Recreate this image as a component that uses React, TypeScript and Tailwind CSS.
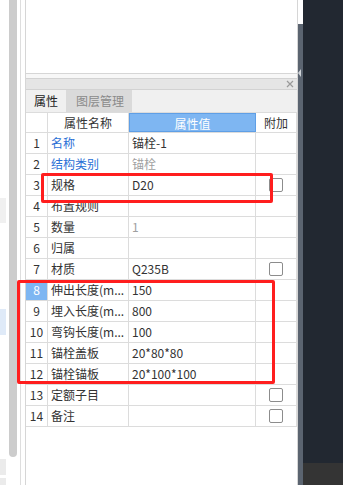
import React from "react"

type Row = {
  no: number
  name: string
  value?: string
  nameBlue?: boolean
  valueGrey?: boolean
  check?: boolean
  activeNo?: boolean
}

const ROWS: Row[] = [
  { no: 1, name: "名称", value: "锚栓-1", nameBlue: true },
  { no: 2, name: "结构类别", value: "锚栓", nameBlue: true, valueGrey: true },
  { no: 3, name: "规格", value: "D20", check: true },
  { no: 4, name: "布置规则" },
  { no: 5, name: "数量", value: "1", valueGrey: true },
  { no: 6, name: "归属" },
  { no: 7, name: "材质", value: "Q235B", check: true },
  { no: 8, name: "伸出长度(m...", value: "150", activeNo: true },
  { no: 9, name: "埋入长度(m...", value: "800" },
  { no: 10, name: "弯钩长度(m...", value: "100" },
  { no: 11, name: "锚栓盖板", value: "20*80*80" },
  { no: 12, name: "锚栓锚板", value: "20*100*100" },
  { no: 13, name: "定额子目", check: true },
  { no: 14, name: "备注", check: true },
]

function Checkbox() {
  return <div className="h-[14px] w-[14px] rounded-[2px] border border-[#8c8c8c] bg-white" />
}

function PropRow({ row }: { row: Row }) {
  return (
    <div className="flex h-[21px] border-b border-[#dcdcdc] text-[12px] leading-[20px]">
      <div
        className={
          row.activeNo
            ? "w-[22px] shrink-0 border-r border-[#dcdcdc] bg-[#7eb6f2] text-center text-white"
            : "w-[22px] shrink-0 border-r border-[#dcdcdc] text-center text-[#333]"
        }
      >
        {row.no}
      </div>
      <div
        className={
          row.nameBlue
            ? "w-[81px] shrink-0 overflow-hidden whitespace-nowrap border-r border-[#dcdcdc] pl-[3px] text-[#2a6fd6]"
            : "w-[81px] shrink-0 overflow-hidden whitespace-nowrap border-r border-[#dcdcdc] pl-[3px] text-[#333]"
        }
      >
        {row.name}
      </div>
      <div
        className={
          row.valueGrey
            ? "w-[127px] shrink-0 overflow-hidden whitespace-nowrap border-r border-[#dcdcdc] pl-[3px] text-[#a0a0a0]"
            : "w-[127px] shrink-0 overflow-hidden whitespace-nowrap border-r border-[#dcdcdc] pl-[3px] text-[#333]"
        }
      >
        {row.value}
      </div>
      <div className="flex w-[41px] shrink-0 items-center justify-center border-r border-[#dcdcdc]">
        {row.check && <Checkbox />}
      </div>
    </div>
  )
}

export default function App() {
  return (
    <div className="relative flex h-[485px] w-[343px] overflow-hidden bg-white font-['Noto_Sans_CJK_SC','Noto_Sans',sans-serif]">
      {/* left edge blocks */}
      <div className="flex w-[9px] shrink-0 flex-col">
        <div className="h-[198px]" />
        <div className="h-[25px] w-[6px] bg-[#f0f0f0]" />
        <div className="h-[86px]" />
        <div className="h-[26px] w-[6px] bg-[#dfeaf8]" />
        <div className="h-[124px]" />
        <div className="h-[16px] w-[6px] bg-[#ebebeb]" />
        <div className="h-[3px]" />
        <div className="h-[7px] w-[6px] bg-[#ebebeb]" />
      </div>

      {/* scrollbar */}
      <div className="w-[8px] shrink-0">
        <div className="h-[457px] rounded-b-[4px] bg-[#cccccc]" />
      </div>
      <div className="w-[3px] shrink-0" />
      <div className="w-[1px] shrink-0 bg-[#dedede]" />
      <div className="w-[4px] shrink-0" />

      {/* panel */}
      <div className="flex w-[273px] shrink-0 flex-col border-x border-[#d6d6d6]">
        <div className="h-[74px] shrink-0 border-b border-[#d6d6d6] bg-white" />
        <div className="h-[4px] shrink-0 bg-[#f7f7f7]" />
        <div className="flex h-[12px] shrink-0 items-center justify-end border-y border-[#d2d2d2] bg-[#e5e5e5] pr-[3px]">
          <svg width="8" height="8" viewBox="0 0 8 8">
            <path d="M1 1L7 7M7 1L1 7" stroke="#9a9a9a" strokeWidth="1.2" />
          </svg>
        </div>
        <div className="flex h-[22px] shrink-0 bg-[#f0f0f0] text-[12px] leading-[22px]">
          <div className="w-[40px] pl-[8px] text-[#222]">属性</div>
          <div className="w-[66px] bg-[#dadada] pl-[10px] text-[#8a8a8a]">图层管理</div>
        </div>

        {/* table */}
        <div className="flex flex-col">
          <div className="flex h-[21px] border-y border-[#dcdcdc] text-[12px] leading-[19px]">
            <div className="w-[22px] shrink-0 border-r border-[#dcdcdc]" />
            <div className="w-[81px] shrink-0 border-r border-[#dcdcdc] text-center text-[#333]">属性名称</div>
            <div className="w-[127px] shrink-0 border border-[#5f9fe6] bg-[#7eb6f2] text-center text-white">属性值</div>
            <div className="w-[41px] shrink-0 border-r border-[#dcdcdc] text-center text-[#333]">附加</div>
          </div>
          {ROWS.map((row) => (
            <PropRow key={row.no} row={row} />
          ))}
        </div>
        <div className="flex-1 bg-white" />
      </div>

      {/* splitter strip */}
      <div className="flex w-[5px] shrink-0 flex-col">
        <div className="h-[24px] bg-white" />
        <div className="flex flex-1 flex-col bg-[#5b6470]">
          <div className="h-[45px]" />
          <div className="h-0 w-0 border-y-[4px] border-r-[3px] border-y-transparent border-r-[#cfd3d8]" />
        </div>
      </div>

      {/* dark side */}
      <div className="flex flex-1 flex-col bg-[#222831]">
        <div className="h-[463px]" />
        <div className="flex-1 bg-[#343434]" />
      </div>

      {/* red annotation boxes */}
      <div className="pointer-events-none absolute left-[41px] top-[173px] h-[30px] w-[232px] rounded-[2px] border-[3px] border-[#ff1e1e]" />
      <div className="pointer-events-none absolute left-[17px] top-[280px] h-[104px] w-[258px] rounded-[2px] border-[3px] border-[#ff1e1e]" />
    </div>
  )
}
